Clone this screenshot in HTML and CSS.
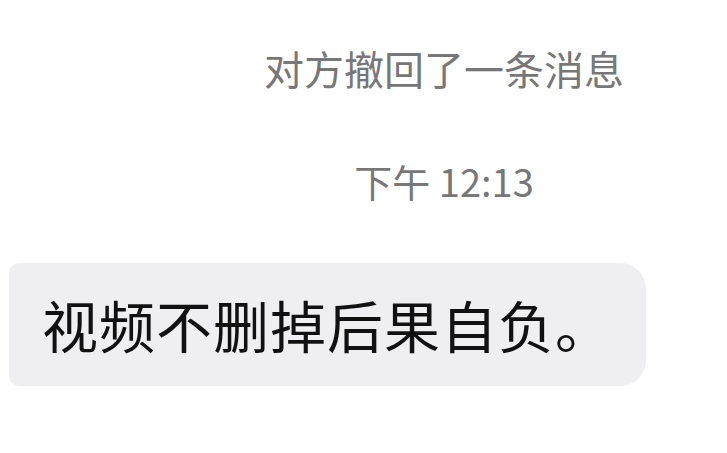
FILE: index.html
```html
<!DOCTYPE html>
<html lang="zh">
<head>
<meta charset="utf-8">
<link rel="stylesheet" href="styles.css">
</head>
<body>
<div class="page">
  <div class="notices">
    <div class="notice recall">对方撤回了一条消息</div>
    <div class="notice time">下午 12:13</div>
  </div>
  <div class="row">
    <div class="bubble">视频不删掉后果自负。</div>
  </div>
</div>
</body>
</html>
```
FILE: styles.css
```css
html, body {
  margin: 0;
  padding: 0;
  background: #ffffff;
}
body {
  width: 727px;
  height: 453px;
  overflow: hidden;
  font-family: "Noto Sans CJK SC", "Noto Sans", sans-serif;
}
.page {
  display: flex;
  flex-direction: column;
}
.notices {
  display: flex;
  flex-direction: column;
  align-items: center;
  padding-left: 161px;
  padding-top: 48px;
}
.notice {
  color: #777777;
  line-height: 1;
}
.recall {
  font-size: 40px;
}
.time {
  font-size: 38px;
  margin-top: 74px;
}
.row {
  display: flex;
  padding-left: 9px;
  margin-top: 63px;
}
.bubble {
  width: 637px;
  height: 123px;
  box-sizing: border-box;
  background: #efeff1;
  border-radius: 10px 26px 26px 10px;
  color: #111111;
  font-size: 56px;
  letter-spacing: 1px;
  display: flex;
  align-items: center;
  padding-left: 33px;
  padding-bottom: 2px;
}
```
